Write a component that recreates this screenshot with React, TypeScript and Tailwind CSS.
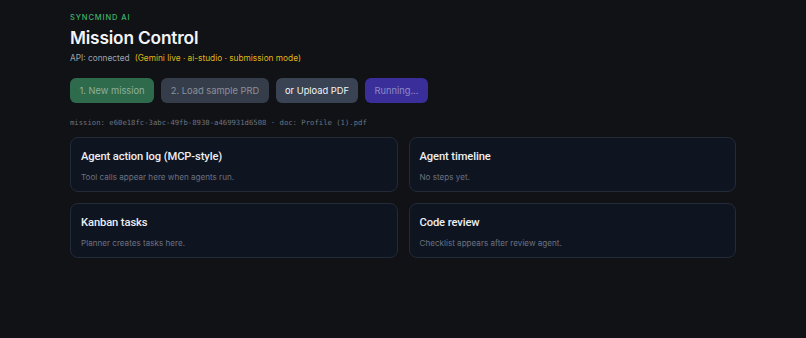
import React from "react";

function Card({ title, body }: { title: string; body: string }) {
  return (
    <div className="rounded-lg border border-[#232a38] bg-[#0f1421] px-[10px] pt-[11px] h-[55px]">
      <div
        className="text-[11.2px] font-medium leading-[15px] tracking-[-0.01em] text-[#eceef2]"
        style={{ fontFamily: "Roboto, Inter, sans-serif" }}
      >
        {title}
      </div>
      <div className="mt-[7px] text-[8.1px] leading-[12px] text-[#6b7280]">{body}</div>
    </div>
  );
}

export default function App() {
  return (
    <div
      className="min-h-[338px] w-full bg-[#111216] px-[70px] pt-[12px]"
      style={{ fontFamily: "Inter, 'Noto Sans', sans-serif" }}
    >
      <div className="text-[7.5px] font-medium tracking-[0.12em] leading-[12px] text-[#4ade80]/80">SYNCMIND AI</div>
      <div className="mt-[3px] text-[17.3px] font-semibold leading-[22px] text-[#f3f4f6] tracking-[-0.01em]">Mission Control</div>
      <div className="mt-[3px] flex gap-[5px] text-[8.3px] leading-[12px]">
        <span className="text-[#9ca3af]">API: connected</span>
        <span className="text-[#facc15]/90">(Gemini live · ai-studio · submission mode)</span>
      </div>
      <div className="mt-[14px] flex gap-[7px] text-[9.3px]">
        <button className="h-[25px] w-[84px] rounded-md bg-[#2e6a4c] text-[#8fb09e]">1. New mission</button>
        <button className="h-[25px] w-[108px] rounded-md bg-[#363d4a] text-[#8a919c]">2. Load sample PRD</button>
        <button className="h-[25px] w-[82px] rounded-md bg-[#3a4353] text-[#f3f4f6]">or Upload PDF</button>
        <button className="h-[25px] w-[63px] rounded-md bg-[#3a2f9a] text-[#8c89c4]">Running...</button>
      </div>
      <div
        className="mt-[15px] text-[7.25px] leading-[10px] text-[#6b7280]"
        style={{ fontFamily: "'DejaVu Sans Mono', 'Liberation Mono', monospace" }}
      >
        mission: e60e18fc-3abc-49fb-8930-a469931d6508 · doc: Profile (1).pdf
      </div>
      <div className="mt-[9px] grid grid-cols-2 gap-[11px]">
        <Card title="Agent action log (MCP-style)" body="Tool calls appear here when agents run." />
        <Card title="Agent timeline" body="No steps yet." />
        <Card title="Kanban tasks" body="Planner creates tasks here." />
        <Card title="Code review" body="Checklist appears after review agent." />
      </div>
    </div>
  );
}
